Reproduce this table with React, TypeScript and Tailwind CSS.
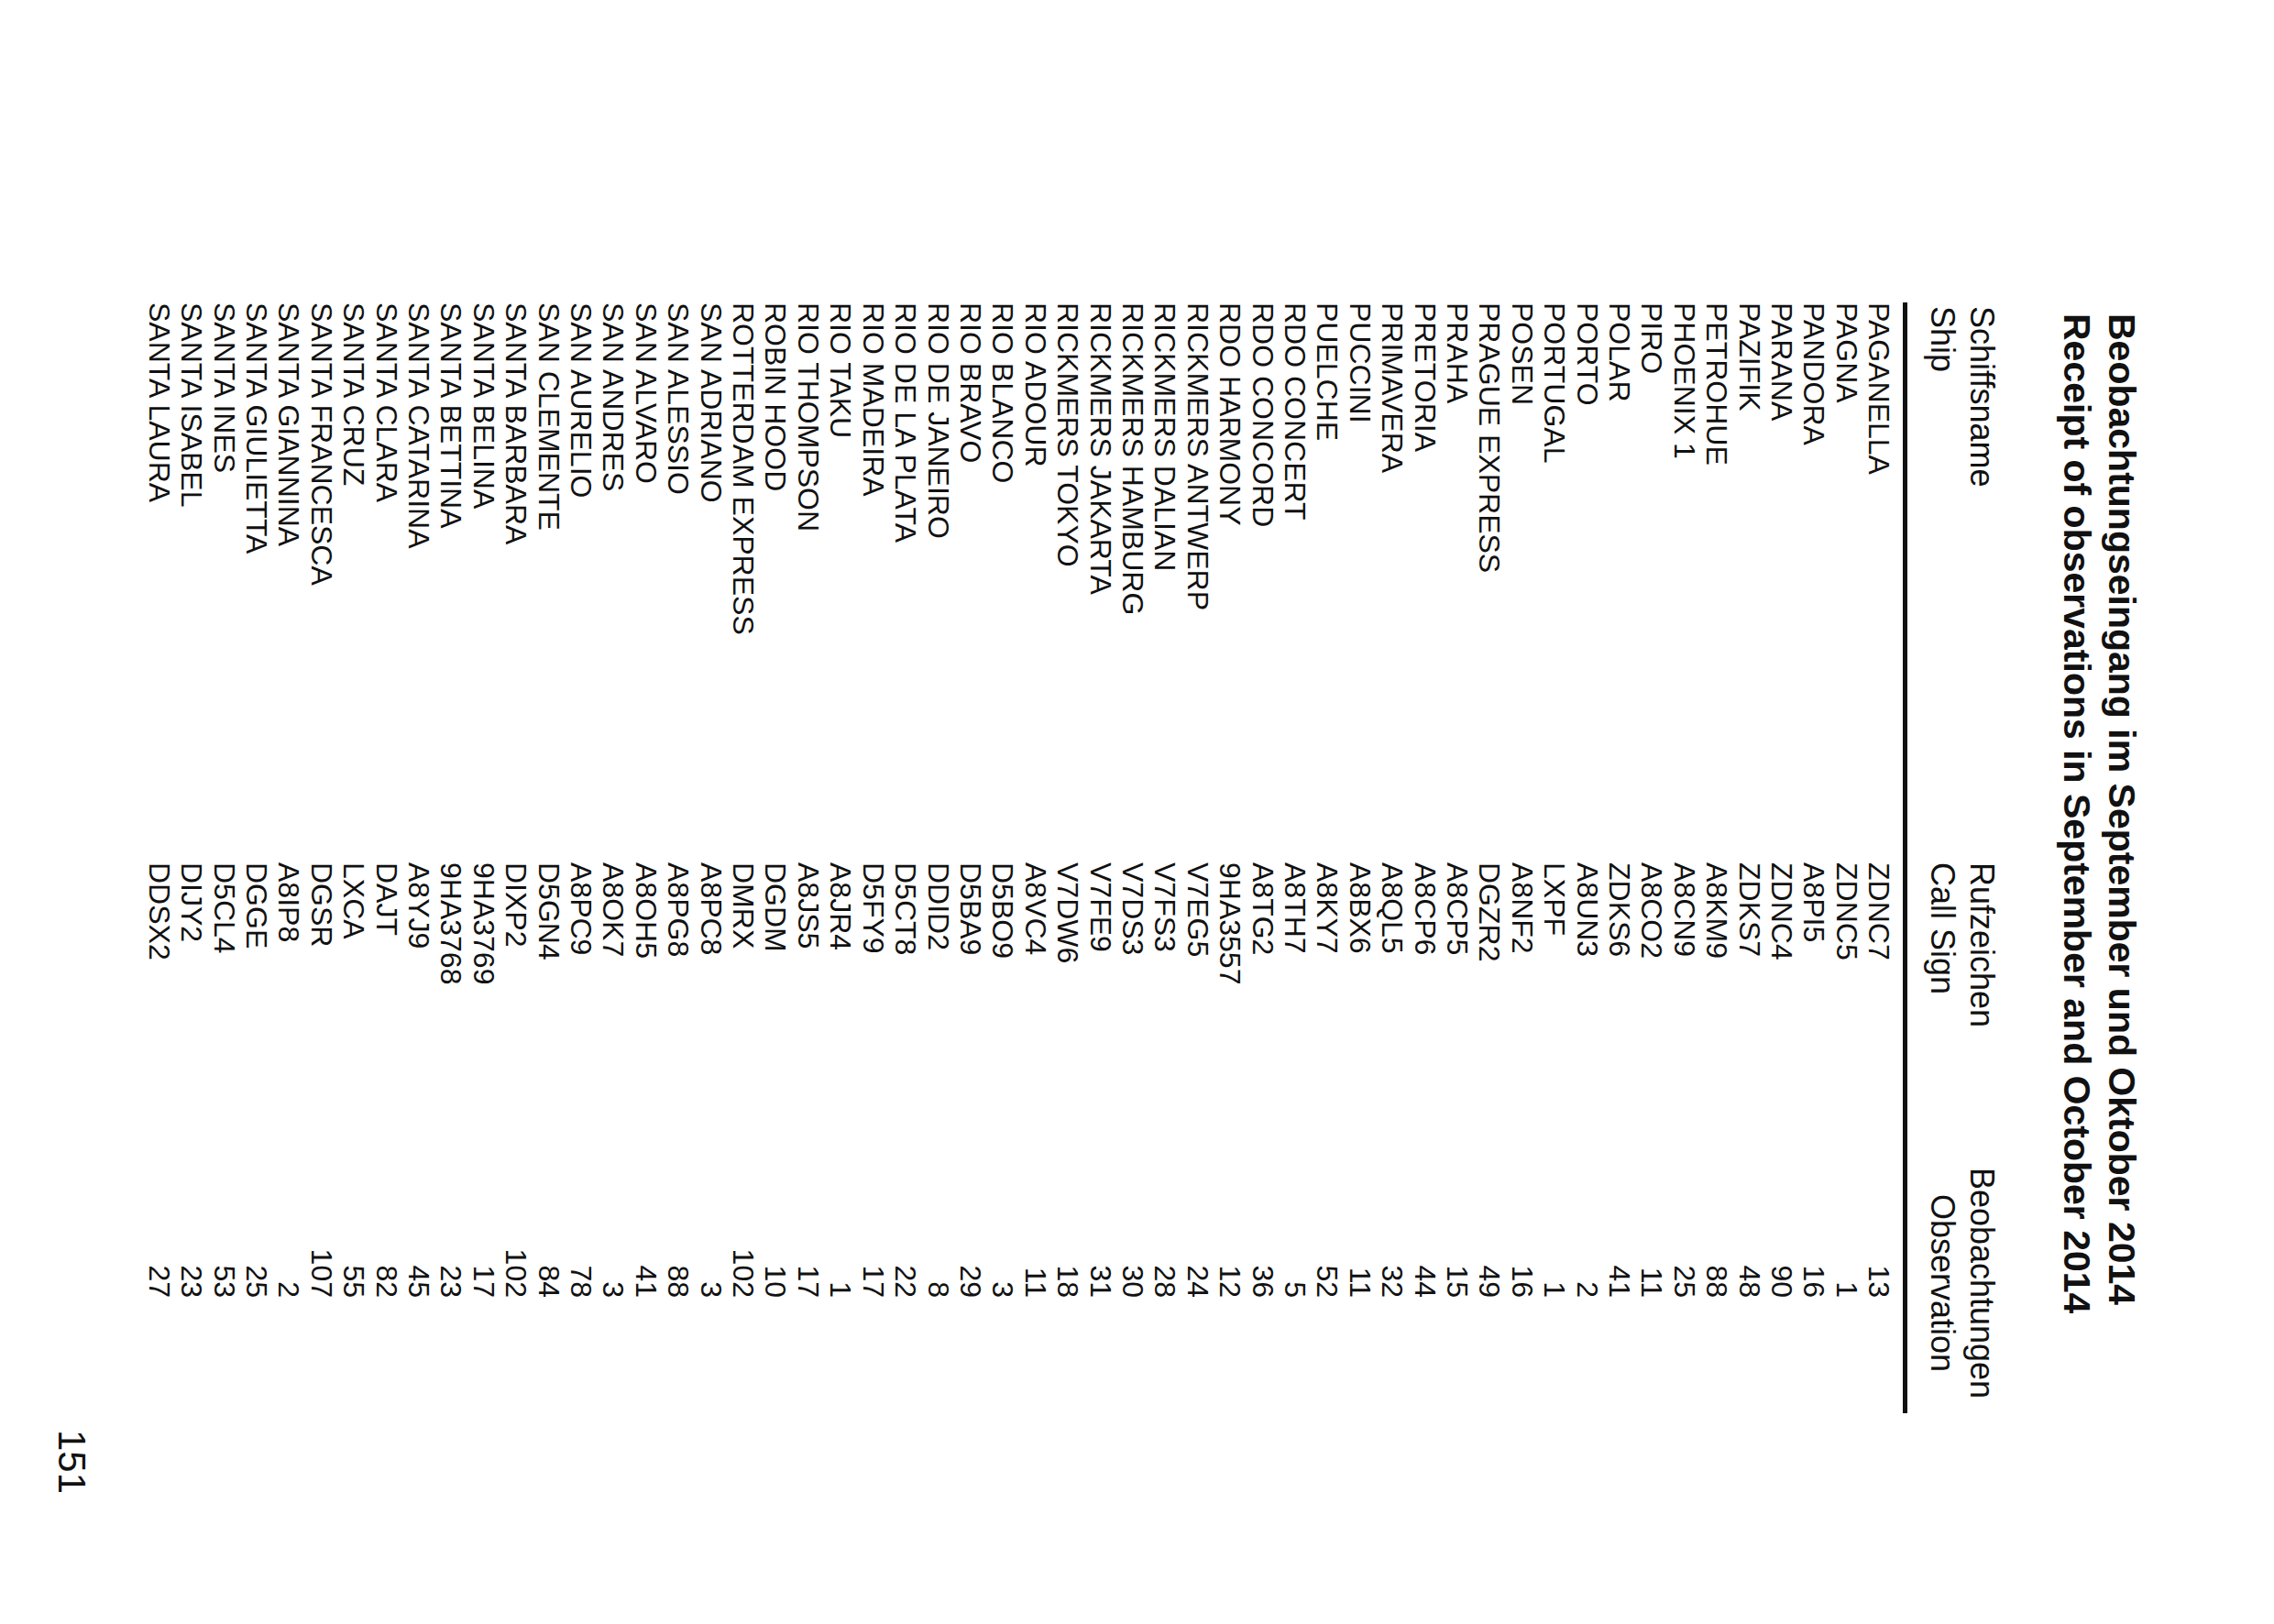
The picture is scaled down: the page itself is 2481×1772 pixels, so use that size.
import React from "react";

const rows: [string, string, number][] = [
  ["PAGANELLA", "ZDNC7", 13],
  ["PAGNA", "ZDNC5", 1],
  ["PANDORA", "A8PI5", 16],
  ["PARANA", "ZDNC4", 90],
  ["PAZIFIK", "ZDKS7", 48],
  ["PETROHUE", "A8KM9", 88],
  ["PHOENIX 1", "A8CN9", 25],
  ["PIRO", "A8CO2", 11],
  ["POLAR", "ZDKS6", 41],
  ["PORTO", "A8UN3", 2],
  ["PORTUGAL", "LXPF", 1],
  ["POSEN", "A8NF2", 16],
  ["PRAGUE EXPRESS", "DGZR2", 49],
  ["PRAHA", "A8CP5", 15],
  ["PRETORIA", "A8CP6", 44],
  ["PRIMAVERA", "A8QL5", 32],
  ["PUCCINI", "A8BX6", 11],
  ["PUELCHE", "A8KY7", 52],
  ["RDO CONCERT", "A8TH7", 5],
  ["RDO CONCORD", "A8TG2", 36],
  ["RDO HARMONY", "9HA3557", 12],
  ["RICKMERS ANTWERP", "V7EG5", 24],
  ["RICKMERS DALIAN", "V7FS3", 28],
  ["RICKMERS HAMBURG", "V7DS3", 30],
  ["RICKMERS JAKARTA", "V7FE9", 31],
  ["RICKMERS TOKYO", "V7DW6", 18],
  ["RIO ADOUR", "A8VC4", 11],
  ["RIO BLANCO", "D5BO9", 3],
  ["RIO BRAVO", "D5BA9", 29],
  ["RIO DE JANEIRO", "DDID2", 8],
  ["RIO DE LA PLATA", "D5CT8", 22],
  ["RIO MADEIRA", "D5FY9", 17],
  ["RIO TAKU", "A8JR4", 1],
  ["RIO THOMPSON", "A8JS5", 17],
  ["ROBIN HOOD", "DGDM", 10],
  ["ROTTERDAM EXPRESS", "DMRX", 102],
  ["SAN ADRIANO", "A8PC8", 3],
  ["SAN ALESSIO", "A8PG8", 88],
  ["SAN ALVARO", "A8OH5", 41],
  ["SAN ANDRES", "A8OK7", 3],
  ["SAN AURELIO", "A8PC9", 78],
  ["SAN CLEMENTE", "D5GN4", 84],
  ["SANTA BARBARA", "DIXP2", 102],
  ["SANTA BELINA", "9HA3769", 17],
  ["SANTA BETTINA", "9HA3768", 23],
  ["SANTA CATARINA", "A8YJ9", 45],
  ["SANTA CLARA", "DAJT", 82],
  ["SANTA CRUZ", "LXCA", 55],
  ["SANTA FRANCESCA", "DGSR", 107],
  ["SANTA GIANNINA", "A8IP8", 2],
  ["SANTA GIULIETTA", "DGGE", 25],
  ["SANTA INES", "D5CL4", 53],
  ["SANTA ISABEL", "DIJY2", 23],
  ["SANTA LAURA", "DDSX2", 27],
];

export default function App() {
  return (
    <div className="w-[2481px] h-[1772px] overflow-hidden bg-white">
      {/* page is set upright, then turned a quarter clockwise */}
      <div className="w-[1772px] h-[2481px] origin-top-left translate-x-[2481px] rotate-90 bg-white pl-[330px] pt-[141.6px] text-[#111] font-['Liberation_Sans',Arial,sans-serif]">
        {/* Title */}
        <div className="ml-3 text-[41px] font-bold leading-[49px]">
          <div>Beobachtungseingang im September und Oktober 2014</div>
          <div>Receipt of observations in September and October 2014</div>
        </div>

        {/* Column heads */}
        <div className="mt-[57px] grid grid-cols-[611px_331px_256px] text-[36px] leading-[43.3px]">
          <div className="pl-1">
            <div>Schiffsname</div>
            <div>Ship</div>
          </div>
          <div>
            <div>Rufzeichen</div>
            <div>Call Sign</div>
          </div>
          <div className="text-center">
            <div>Beobachtungen</div>
            <div>Observation</div>
          </div>
        </div>

        <div className="mt-[16.5px] h-[5px] w-[1212px] bg-[#111]" />

        {/* Rows */}
        <div className="mt-[9px] grid grid-cols-[611px_345px_130px] text-[32px] leading-[35.4px]">
          {rows.map(([ship, sign, n]) => (
            <React.Fragment key={ship}>
              <div className="whitespace-nowrap">{ship}</div>
              <div>{sign}</div>
              <div className="text-right">{n}</div>
            </React.Fragment>
          ))}
        </div>

        {/* Page number */}
        <div className="mt-[56.6px] pl-[1230px] text-[42px] leading-[42px]">151</div>
      </div>
    </div>
  );
}
